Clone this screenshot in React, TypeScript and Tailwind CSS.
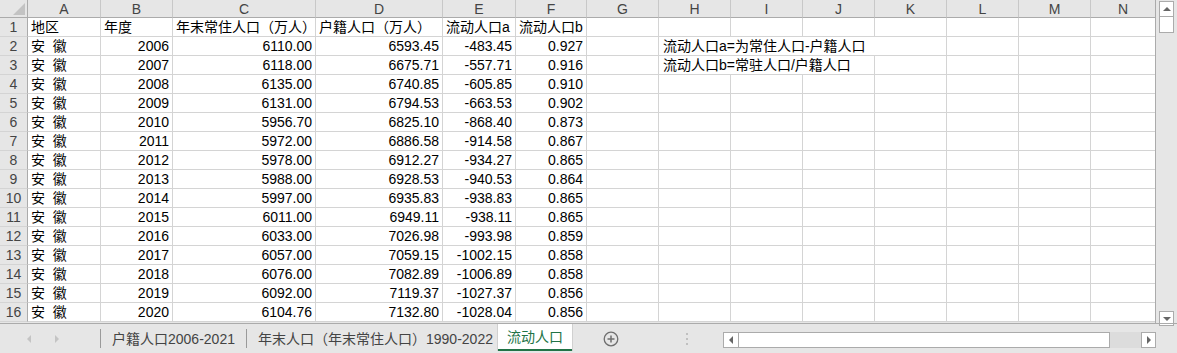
import { Fragment } from "react";

const letters = ["A", "B", "C", "D", "E", "F", "G", "H", "I", "J", "K", "L", "M", "N"];

const rows: [string, string, string, string, string][] = [
  ["2006", "6110.00", "6593.45", "-483.45", "0.927"],
  ["2007", "6118.00", "6675.71", "-557.71", "0.916"],
  ["2008", "6135.00", "6740.85", "-605.85", "0.910"],
  ["2009", "6131.00", "6794.53", "-663.53", "0.902"],
  ["2010", "5956.70", "6825.10", "-868.40", "0.873"],
  ["2011", "5972.00", "6886.58", "-914.58", "0.867"],
  ["2012", "5978.00", "6912.27", "-934.27", "0.865"],
  ["2013", "5988.00", "6928.53", "-940.53", "0.864"],
  ["2014", "5997.00", "6935.83", "-938.83", "0.865"],
  ["2015", "6011.00", "6949.11", "-938.11", "0.865"],
  ["2016", "6033.00", "7026.98", "-993.98", "0.859"],
  ["2017", "6057.00", "7059.15", "-1002.15", "0.858"],
  ["2018", "6076.00", "7082.89", "-1006.89", "0.858"],
  ["2019", "6092.00", "7119.37", "-1027.37", "0.856"],
  ["2020", "6104.76", "7132.80", "-1028.04", "0.856"],
];

const notes: Record<number, { text: string; span: number }> = {
  0: { text: "流动人口a=为常住人口-户籍人口", span: 4 },
  1: { text: "流动人口b=常驻人口/户籍人口", span: 3 },
};

const gridCols =
  "grid grid-cols-[28px_73px_72px_143px_127px_73px_71px_72px_72px_72px_72px_72px_72px_72px_65px]";

const cell =
  "h-[19px] border-r border-b border-[#d4d4d4] bg-white flex items-center whitespace-nowrap text-black";

function RowHead({ n }: { n: number }) {
  return (
    <div className="h-[19px] border-r border-b border-r-[#ababab] border-b-[#d4d4d4] bg-[#e6e6e6] flex items-center justify-center text-[#444]">
      {n}
    </div>
  );
}

function Tri({ dir, className }: { dir: "up" | "down" | "left" | "right"; className: string }) {
  const pts = {
    up: "0,5 4,1 8,5",
    down: "0,1 4,5 8,1",
    left: "5,0 1,4 5,8",
    right: "1,0 5,4 1,8",
  }[dir];
  const vertical = dir === "up" || dir === "down";
  return (
    <svg
      viewBox={vertical ? "0 0 8 6" : "0 0 6 8"}
      className={`${vertical ? "w-[8px] h-[6px]" : "w-[6px] h-[8px]"} ${className}`}
    >
      <polygon points={pts} fill="currentColor" />
    </svg>
  );
}

export default function App() {
  return (
    <div
      className="w-[1177px] h-[353px] bg-[#e6e6e6] flex flex-col overflow-hidden text-[14px] leading-none"
      style={{ fontFamily: '"Liberation Sans", "Noto Sans CJK SC", sans-serif' }}
    >
      <div className="flex h-[323px]">
        {/* sheet grid */}
        <div className="w-[1156px] border-r border-[#ababab] overflow-hidden">
          <div className={gridCols}>
            <div className="h-[18px] border-r border-b border-[#ababab] bg-[#e6e6e6] flex items-end justify-end p-[2px]">
              <svg viewBox="0 0 12 12" className="w-[12px] h-[12px]">
                <polygon points="12,0 12,12 0,12" fill="#c3c3c3" />
              </svg>
            </div>
            {letters.map((l) => (
              <div
                key={l}
                className="h-[18px] border-r border-b border-r-[#c8c8c8] border-b-[#ababab] bg-[#e6e6e6] flex items-center justify-center text-[#444]"
              >
                {l}
              </div>
            ))}

            <RowHead n={1} />
            {["地区", "年度", "年末常住人口（万人）", "户籍人口（万人）", "流动人口a", "流动人口b"].map((t) => (
              <div key={t} className={`${cell} pl-[3px] overflow-visible`}>
                {t}
              </div>
            ))}
            {letters.slice(6).map((l) => (
              <div key={l} className={cell} />
            ))}

            {rows.map((r, i) => {
              const note = notes[i];
              const blanks = note ? 7 - note.span : 7;
              return (
                <Fragment key={r[0]}>
                  <RowHead n={i + 2} />
                  <div className={`${cell} pl-[3px] whitespace-pre`}>安  徽</div>
                  {r.map((v, j) => (
                    <div key={j} className={`${cell} justify-end pr-[3px]`}>
                      {v}
                    </div>
                  ))}
                  <div className={cell} />
                  {note && (
                    <div className={`${cell} pl-[4px] ${note.span === 4 ? "col-span-4" : "col-span-3"}`}>
                      {note.text}
                    </div>
                  )}
                  {Array.from({ length: blanks }).map((_, k) => (
                    <div key={k} className={cell} />
                  ))}
                </Fragment>
              );
            })}
          </div>
        </div>

        {/* vertical scrollbar */}
        <div className="flex-1 flex flex-col items-center pt-[1px]">
          <div className="w-[15px] h-[16px] bg-white border border-[#ababab] flex items-center justify-center text-[#666]">
            <Tri dir="up" className="" />
          </div>
          <div className="w-[15px] h-[17px] bg-white border border-[#ababab] -mt-[1px]" />
          <div className="flex-1" />
          <div className="w-[15px] h-[15px] mb-[-3px] bg-white border border-[#ababab] flex items-center justify-center text-[#666]">
            <Tri dir="down" className="" />
          </div>
        </div>
      </div>

      {/* sheet tabs */}
      <div className="h-[30px] flex items-stretch text-[#444] border-t border-[#ababab] whitespace-nowrap">
        <div className="w-[100px] flex items-center pl-[26px] gap-[22px] text-[#c4c4c4]">
          <Tri dir="left" className="" />
          <Tri dir="right" className="" />
        </div>
        <div className="flex items-center">
          <div className="w-[1px] h-[19px] bg-[#9a9a9a]" />
          <div className="pl-[11px] w-[145px]">户籍人口2006-2021</div>
          <div className="w-[1px] h-[19px] bg-[#9a9a9a]" />
          <div className="pl-[11px] w-[250px]">年末人口（年末常住人口）1990-2022</div>
        </div>
        <div className="w-[76px] bg-white border-x border-[#d0d0d0] flex flex-col mb-[2px]">
          <div className="flex-1 flex items-center justify-center text-[#217346]">流动人口</div>
          <div className="h-[2px] bg-[#217346]" />
        </div>
        <div className="w-[82px] flex items-center justify-center">
          <svg viewBox="0 0 16 16" className="w-[16px] h-[16px] -ml-[6px]">
            <circle cx="8" cy="8" r="6.8" fill="none" stroke="#6f6f6f" strokeWidth="1.3" />
            <path d="M8 4.5v7M4.5 8h7" stroke="#6f6f6f" strokeWidth="1.5" />
          </svg>
        </div>
        <div className="w-[72px] flex items-center justify-center text-[#c0c0c0] -ml-[4px]">
          <svg viewBox="0 0 4 14" className="w-[4px] h-[14px]">
            <rect x="1" y="1" width="2" height="2" fill="currentColor" />
            <rect x="1" y="6" width="2" height="2" fill="currentColor" />
            <rect x="1" y="11" width="2" height="2" fill="currentColor" />
          </svg>
        </div>
        <div className="flex items-start pt-[8px]">
          <div className="w-[433px] h-[16px] flex">
            <div className="w-[16px] h-[16px] bg-white border border-[#ababab] flex items-center justify-center text-[#666]">
              <Tri dir="left" className="" />
            </div>
            <div className="w-[372px] h-[16px] bg-white border border-[#ababab] -ml-[1px]" />
            <div className="flex-1 bg-[#dcdcdc]" />
            <div className="w-[15px] h-[16px] bg-white border border-[#ababab] flex items-center justify-center text-[#666]">
              <Tri dir="right" className="" />
            </div>
          </div>
        </div>
      </div>
    </div>
  );
}
